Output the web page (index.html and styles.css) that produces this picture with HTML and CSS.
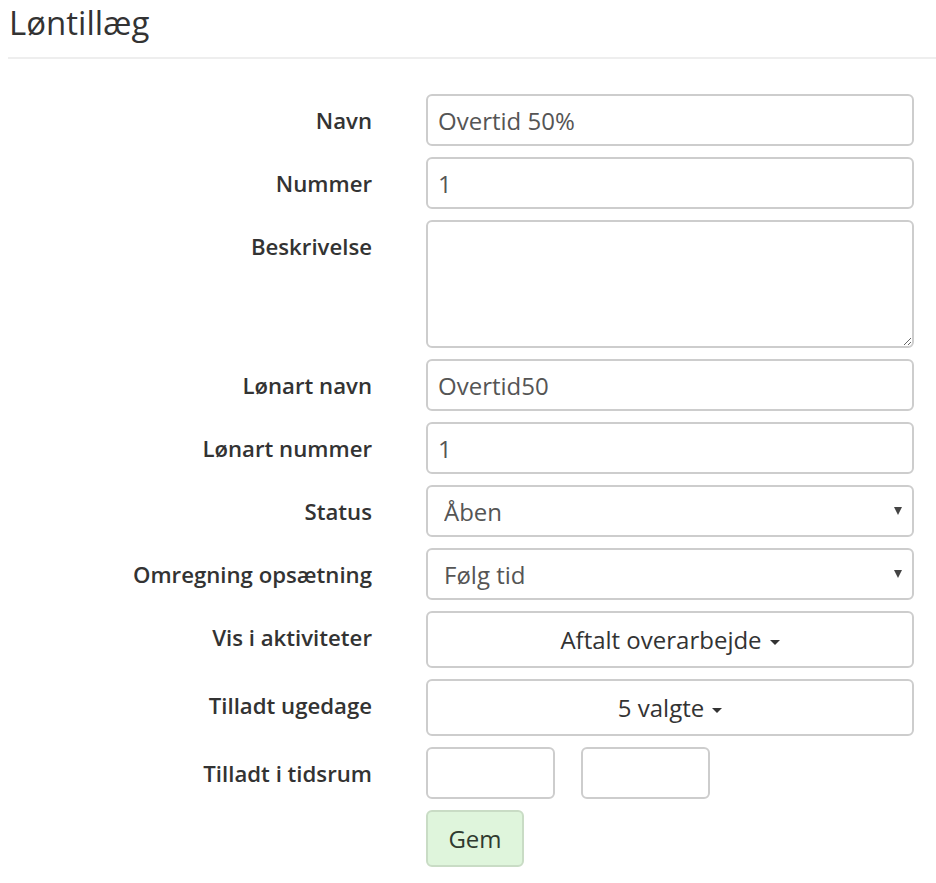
FILE: index.html
```html
<!DOCTYPE html>
<html lang="da">
<head>
<meta charset="utf-8">
<title>Løntillæg</title>
<link rel="stylesheet" href="styles.css">
</head>
<body>
<div class="page">
  <h1 class="title">Løntillæg</h1>
  <form class="form">
    <label class="lbl">Navn</label>
    <input class="ctl" type="text" value="Overtid 50%">

    <label class="lbl">Nummer</label>
    <input class="ctl" type="text" value="1">

    <label class="lbl">Beskrivelse</label>
    <textarea class="ctl area"></textarea>

    <label class="lbl">Lønart navn</label>
    <input class="ctl" type="text" value="Overtid50">

    <label class="lbl">Lønart nummer</label>
    <input class="ctl" type="text" value="1">

    <label class="lbl">Status</label>
    <div class="sel-wrap">
      <select class="ctl sel"><option>Åben</option></select>
      <span class="sel-arrow"></span>
    </div>

    <label class="lbl">Omregning opsætning</label>
    <div class="sel-wrap">
      <select class="ctl sel"><option>Følg tid</option></select>
      <span class="sel-arrow"></span>
    </div>

    <label class="lbl">Vis i aktiviteter</label>
    <button type="button" class="dd">Aftalt overarbejde<span class="caret"></span></button>

    <label class="lbl">Tilladt ugedage</label>
    <button type="button" class="dd">5 valgte<span class="caret"></span></button>

    <label class="lbl">Tilladt i tidsrum</label>
    <div class="time-row">
      <input class="ctl small" type="text">
      <input class="ctl small" type="text">
    </div>

    <span class="lbl"></span>
    <div><button type="button" class="save">Gem</button></div>
  </form>
</div>
</body>
</html>
```
FILE: styles.css
```css
* { box-sizing: border-box; }

body {
  margin: 0;
  background: #ffffff;
  font-family: "Open Sans", "Liberation Sans", sans-serif;
  color: #333333;
}

.page {
  padding-left: 8px;
}

.title {
  margin: 5px 0 0 0;
  padding: 0 0 16px 1px;
  font-size: 33px;
  line-height: 36px;
  font-weight: 500;
  color: #333333;
  border-bottom: 2px solid #eeeeee;
}

.form {
  display: grid;
  grid-template-columns: 364px 488px;
  column-gap: 54px;
  row-gap: 11px;
  margin-top: 35px;
}

.lbl {
  display: block;
  text-align: right;
  font-size: 22.2px;
  line-height: 30px;
  font-weight: 550;
  padding-top: 12px;
  color: #333333;
}

.ctl {
  display: block;
  width: 100%;
  height: 52px;
  margin: 0;
  padding: 0 10px;
  font-family: "Open Sans", "Liberation Sans", sans-serif;
  font-size: 24px;
  color: #555555;
  background: #ffffff;
  border: 2px solid #cdcdcd;
  border-radius: 6px;
  outline: none;
}

.area {
  height: 128px;
  resize: vertical;
  padding: 8px 10px;
}

.sel-wrap {
  position: relative;
}

.sel {
  appearance: none;
  -webkit-appearance: none;
  padding-left: 16px;
  color: #555555;
}

.sel-arrow {
  position: absolute;
  right: 12px;
  top: 22px;
  width: 0;
  height: 0;
  border-left: 4px solid transparent;
  border-right: 4px solid transparent;
  border-top: 8px solid #444444;
  pointer-events: none;
}

.dd {
  display: block;
  width: 100%;
  height: 57px;
  margin: 0;
  font-family: "Open Sans", "Liberation Sans", sans-serif;
  font-size: 24px;
  color: #333333;
  background: #ffffff;
  border: 2px solid #cdcdcd;
  border-radius: 6px;
  text-align: center;
  padding: 0 12px;
}

.caret {
  display: inline-block;
  width: 0;
  height: 0;
  margin-left: 8px;
  vertical-align: middle;
  border-top: 5px solid #333333;
  border-left: 5px solid transparent;
  border-right: 5px solid transparent;
}

.time-row {
  display: flex;
  gap: 26px;
}

.small {
  width: 129px;
}

.save {
  height: 57px;
  width: 98px;
  margin: 0;
  padding: 0;
  font-family: "Open Sans", "Liberation Sans", sans-serif;
  font-size: 24px;
  color: #2f3a2f;
  background: #dff5dc;
  border: 2px solid #c9dcc5;
  border-radius: 6px;
}
```
